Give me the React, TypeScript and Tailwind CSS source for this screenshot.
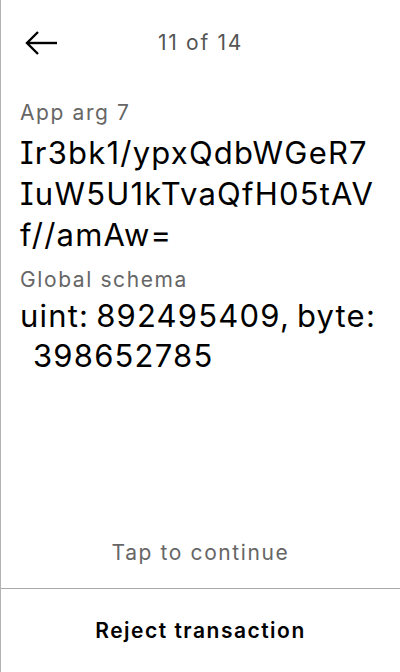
const valueLines = ["Ir3bk1/ypxQdbWGeR7", "IuW5U1kTvaQfH05tAV", "f//amAw="];

export default function App() {
  return (
    <div className="flex h-[672px] w-[400px] flex-col border-l border-[#b3b3b3] bg-white text-black [font-family:Inter,'Noto_Sans',sans-serif] [font-feature-settings:'cv08']">
      <header className="relative flex h-[86px] items-center justify-center">
        <button type="button" className="absolute left-[22px] top-[29px] h-[28px] w-[36px]">
          <svg viewBox="0 0 36 28" className="h-[28px] w-[36px]" fill="none" stroke="black" strokeWidth="2.4">
            <path d="M34 14H4" />
            <path d="M15 3L4 14l11 11" />
          </svg>
        </button>
        <span className="text-[21px] tracking-[1.7px] text-[#555]">11 of 14</span>
      </header>

      <main className="flex-1 px-[19px] pt-[14px]">
        <p className="text-[21px] leading-[26px] tracking-[1.6px] text-[#666]">App arg 7</p>
        <div className="mt-[6px] text-[31px] leading-[41px] tracking-[1.2px]">
          {valueLines.map((line) => (
            <p key={line} className="whitespace-pre">{line}</p>
          ))}
        </div>
        <p className="mt-[12px] text-[21px] leading-[26px] tracking-[1.6px] text-[#666]">Global schema</p>
        <div className="mt-[3px] text-[31px] leading-[40px] tracking-[1.2px]">
          <p className="whitespace-pre [word-spacing:-3px]">uint: 892495409, byte:</p>
          <p className="whitespace-pre pl-[13px]">398652785</p>
        </div>
      </main>

      <div className="pb-[20px] text-center text-[21px] tracking-[1.6px] text-[#666]">Tap to continue</div>
      <div className="flex h-[84px] items-center justify-center border-t border-[#aaa]">
        <span className="text-[21px] font-semibold tracking-[1.5px]">Reject transaction</span>
      </div>
    </div>
  );
}
